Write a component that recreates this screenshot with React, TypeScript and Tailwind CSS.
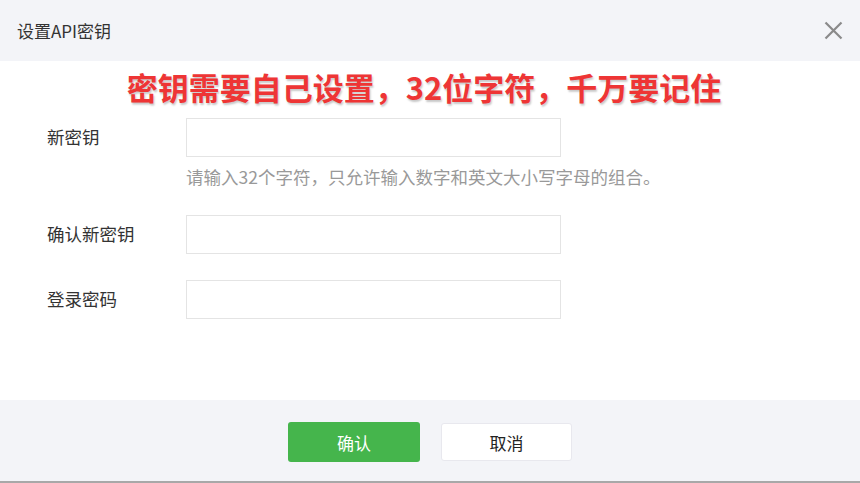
export default function App() {
    const rows = [
        {label: "新密钥", hint: "请输入32个字符，只允许输入数字和英文大小写字母的组合。"},
        {label: "确认新密钥"},
        {label: "登录密码"},
    ];

    return <div className="w-[860px] h-[483px] bg-white flex flex-col font-['Noto_Sans_CJK_SC',sans-serif] text-[#333]">
        <header className="h-[61px] shrink-0 bg-[#f3f4f8] flex items-center justify-between pl-[17px] pr-[17px]">
            <span className="text-[17px] leading-none text-[#333]">设置API密钥</span>
            <button className="w-[20px] h-[20px] flex items-center justify-center">
                <svg width="19" height="19" viewBox="0 0 19 19" fill="none" stroke="#8a8a8a" strokeWidth="2.2">
                    <path d="M1.5 1.5L17.5 17.5M17.5 1.5L1.5 17.5"/>
                </svg>
            </button>
        </header>

        <main className="flex-1 flex flex-col">
            <div className="h-[50px] flex items-center justify-center pr-[12px]">
                <span className="text-[31px] font-semibold leading-none text-[#ee3535] [text-shadow:1px_2px_2px_rgba(0,0,0,0.22)]">
                    密钥需要自己设置，32位字符，千万要记住
                </span>
            </div>

            <div className="flex flex-col pl-[47px] mt-[7px]">
                {rows.map((r, i) => (
                    <div key={r.label} className={i === 0 ? "" : "mt-[26px]"}>
                        <div className="flex items-center">
                            <label className="w-[139px] text-[17.5px] leading-none text-[#333] -mt-[2px]">{r.label}</label>
                            <input type="password" className="w-[375px] h-[39px] border border-[#e4e4e4] bg-white outline-none px-2" />
                        </div>
                        {r.hint && (
                            <p className="ml-[139px] mt-[8px] h-[24px] leading-[24px] text-[17.5px] text-[#999] whitespace-nowrap">{r.hint}</p>
                        )}
                    </div>
                ))}
            </div>
        </main>

        <footer className="h-[83px] shrink-0 bg-[#f3f4f8] border-b-2 border-[#a8a8a8] flex items-center justify-center gap-[21px] pt-[3px]">
            <button className="w-[132px] h-[40px] rounded-[3px] bg-[#45b54c] text-white text-[17px] leading-none">确认</button>
            <button className="w-[131px] h-[38px] rounded-[3px] bg-white border border-[#e8e8ee] text-[#222] text-[17px] leading-none">取消</button>
        </footer>
    </div>;
}
